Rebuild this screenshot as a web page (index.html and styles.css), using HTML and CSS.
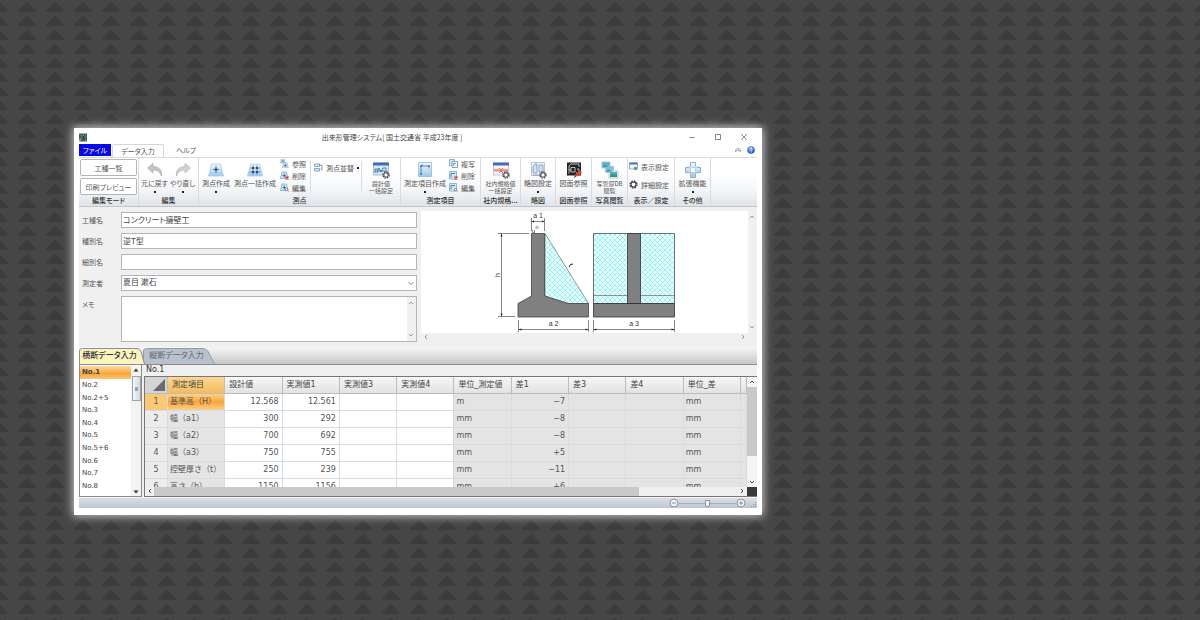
FILE: index.html
```html
<!DOCTYPE html>
<html lang="ja">
<head>
<meta charset="utf-8">
<title>出来形管理システム</title>
<link rel="stylesheet" href="styles.css">
</head>
<body>
<svg class="sprite" aria-hidden="true">
  <defs>
    <linearGradient id="g-road" x1="0" y1="0" x2="0" y2="1"><stop offset="0" stop-color="#f2f9ff"/><stop offset="1" stop-color="#9dc8ec"/></linearGradient>
    <radialGradient id="g-help" cx=".4" cy=".3" r=".7"><stop offset="0" stop-color="#7db1f5"/><stop offset="1" stop-color="#1c4fc0"/></radialGradient>
    <pattern id="hatch" width="5" height="5" patternUnits="userSpaceOnUse"><rect width="5" height="5" fill="#e6ffff"/><path d="M0 0l5 5M5 0l-5 5" stroke="#7fe9ec" stroke-width=".7"/></pattern>
    <symbol id="gear" viewBox="0 0 8 8"><circle cx="4" cy="4" r="3.1" fill="none" stroke="#444" stroke-width="1.2" stroke-dasharray="1.5 .93"/><circle cx="4" cy="4" r="2.200" fill="#fff" stroke="#333" stroke-width=".9"/></symbol>
    <symbol id="road" viewBox="0 0 16 14"><path d="M3.500 1h9L15.500 13H.5z" fill="url(#g-road)" stroke="#a9cdea" stroke-width=".8"/></symbol>
    <symbol id="sheet" viewBox="0 0 9 9"><path d="M.5 .5h5v6h-5z" fill="#d5e8f8" stroke="#6f9fcb" stroke-width=".8"/><path d="M3 2.500h5.500v6H3z" fill="#eef7ff" stroke="#5f94c6" stroke-width=".8"/><path d="M4.500 7V4.500H7" fill="none" stroke="#46799f" stroke-width=".7"/></symbol>
    <symbol id="mini-road" viewBox="0 0 9 9"><path d="M2 1h4.500L8 7.500H.5z" fill="#d2e8f9" stroke="#7fa9cd" stroke-width=".8"/><path d="M4.300 2.500v4M2.500 4.600H6" stroke="#35669a" stroke-width=".9"/></symbol>
    <symbol id="mini-sheet" viewBox="0 0 9 9"><path d="M.5 .5h7v7.500h-7z" fill="#cfe6f8" stroke="#7aa7ce" stroke-width=".8"/><path d="M2 6.500V2.500h4" fill="none" stroke="#35669a" stroke-width=".8"/></symbol>
    <symbol id="cross" viewBox="0 0 4 4"><path d="M.5 .5l3 3M3.500 .5l-3 3" stroke="#e0281e" stroke-width="1.100"/></symbol>
    <symbol id="lens" viewBox="0 0 4 4"><circle cx="1.600" cy="1.600" r="1.200" fill="#fff" stroke="#35669a" stroke-width=".7"/><path d="M2.500 2.500l1.200 1.200" stroke="#c8862e" stroke-width=".9"/></symbol>
  </defs>
</svg>

<main class="window">
  <header class="titlebar">
    <svg class="app-icon" viewBox="0 0 9 9"><path fill="#4a5a54" d="M0 0h9v9H0z"/><path d="M1 1l3 3-3 4M6 0l2 3-2 2 2 4" stroke="#46b48a" fill="none"/><path d="M3 1l4 6M7 1L3 7" stroke="#1f2b27" stroke-width=".8"/><path d="M0 5l2 1M6 3h2" stroke="#d84a42"/><path d="M0 8l2-1M4 2h1" stroke="#eee"/></svg>
    <h1 class="title">出来形管理システム[ 国土交通省 平成23年度 ]</h1>
    <div class="controls">
      <button aria-label="最小化"><svg viewBox="0 0 8 8"><path d="M1.500 4.500h5"/></svg></button>
      <button aria-label="最大化"><svg viewBox="0 0 8 8"><path d="M1.500 1.500h5v5h-5z"/></svg></button>
      <button aria-label="閉じる"><svg viewBox="0 0 8 8"><path d="M1.200 1.200l5.600 5.600M6.800 1.200L1.200 6.800"/></svg></button>
    </div>
  </header>

  <nav class="menu">
    <button class="menu-file">ファイル</button>
    <button class="menu-tab is-active">データ入力</button>
    <button class="menu-tab">ヘルプ</button>
    <button class="menu-tool push" aria-label="リボンを折りたたむ"><svg viewBox="0 0 8 8"><path d="M1.500 5.500V4L4 2l2.500 2v1.500L4 4z" fill="#fff" stroke="#777" stroke-width=".7"/></svg></button>
    <button class="menu-tool" aria-label="ヘルプを開く"><svg viewBox="0 0 8 8"><circle cx="4" cy="4" r="3.800" fill="url(#g-help)"/><path d="M2.900 3.100c0-1.500 2.300-1.500 2.300 0 0 .8-1.100.8-1.100 1.700M4.100 5.500v.9" fill="none" stroke="#fff" stroke-width=".9"/></svg></button>
  </nav>

  <section class="ribbon">
    <div class="group w60">
      <div class="group-body stack">
        <button class="plain">工種一覧</button>
        <button class="plain">印刷プレビュー</button>
      </div>
      <h2>編集モード</h2>
    </div>
    <div class="group w60">
      <div class="group-body center">
        <button class="big w28"><svg viewBox="0 0 18 18"><path d="M1.500 7L7 2.500v3C12.500 5.500 16.500 9 15.500 15 14 11 11.500 9 7 9v3z" fill="#c3c6c8" stroke="#a3a6a9" stroke-width=".7"/></svg><span>元に戻す</span><i class="drop"></i></button>
        <button class="big w28"><svg viewBox="0 0 18 18"><path d="M16.500 7L11 2.500v3C5.500 5.500 1.500 9 2.500 15 4 11 6.500 9 11 9v3z" fill="#cfd1d3" stroke="#b0b3b5" stroke-width=".7"/></svg><span>やり直し</span><i class="drop"></i></button>
      </div>
      <h2>編集</h2>
    </div>
    <div class="group w202">
      <div class="group-body">
        <button class="big w34"><svg viewBox="0 0 18 18"><use href="#road" x="1" y="2" width="16" height="14"/><path d="M9 5v7M6 8.500h6" stroke="#4a6f92"/><circle cx="9" cy="8.500" r="1.300" fill="#24527c"/></svg><span>測点作成</span><i class="drop"></i></button>
        <button class="big w44"><svg viewBox="0 0 18 18"><use href="#road" x="1" y="2" width="16" height="14"/><path d="M7 4v10M11 4v10M4 7h10M3.500 11h11" stroke="#5a7c9c" stroke-width=".8"/><path d="M6 6h2v2H6zM10 6h2v2h-2zM6 10h2v2H6zM10 10h2v2h-2z" fill="#24486a"/></svg><span>測点一括作成</span></button>
        <div class="smalls">
          <button class="small"><svg viewBox="0 0 9 9"><use href="#mini-road" x="0" y="-1" width="6" height="6"/><use href="#mini-road" x="2" y="3" width="7" height="7"/></svg><span>参照</span></button>
          <button class="small"><svg viewBox="0 0 9 9"><use href="#mini-road" width="9" height="9"/><use href="#cross" x="5" y="5" width="4" height="4"/></svg><span>削除</span></button>
          <button class="small"><svg viewBox="0 0 9 9"><use href="#mini-road" width="9" height="9"/><use href="#lens" x="5" y="5" width="4" height="4"/></svg><span>編集</span></button>
        </div>
        <div class="sub w52">
          <button class="small"><svg viewBox="0 0 9 9"><path d="M.5 1h5v2.500h-5zM.5 5.500h5V8h-5z" fill="#dcecf9" stroke="#6a93bd" stroke-width=".8"/><path d="M5.500 2.200H8v4.500M6.500 5.700L8 7.200" fill="none" stroke="#4f86b8" stroke-width=".8"/></svg><span>測点並替</span><i class="drop"></i></button>
        </div>
        <button class="big grow"><svg viewBox="0 0 18 18"><path d="M1.500 2h15v12h-15z" fill="#d7e9f8" stroke="#8fadc8" stroke-width=".8"/><path d="M1 1.500h16v3H1z" fill="#3e6fb5"/><path d="M3 12V8h3M5 12l2-5 2 4 2-4h3v4M3 10h10" fill="none" stroke="#4b7094" stroke-width=".9"/><use href="#gear" x="10" y="10" width="8" height="8"/></svg><span>設計値<br>一括設定</span></button>
      </div>
      <h2>測点</h2>
    </div>
    <div class="group w80">
      <div class="group-body">
        <button class="big w48"><svg viewBox="0 0 18 18"><path d="M2.500 1.500h13v14h-13z" fill="url(#g-road)" stroke="#8cbbe3" stroke-width=".8"/><path d="M5 13V5h8M5 5l2-1.500M13 5v2.500" fill="none" stroke="#4c7ba6" stroke-width=".9"/><path d="M4.200 4.200h1.600v1.600H4.200zM12.200 4.200h1.600v1.600h-1.600zM4.200 12.200h1.600v1.600H4.200z" fill="#2e618f"/></svg><span>測定項目作成</span><i class="drop"></i></button>
        <div class="smalls tight">
          <button class="small"><svg viewBox="0 0 9 9"><use href="#sheet" width="9" height="9"/></svg><span>複写</span></button>
          <button class="small"><svg viewBox="0 0 9 9"><use href="#mini-sheet" width="9" height="9"/><use href="#cross" x="5" y="5" width="4" height="4"/></svg><span>削除</span></button>
          <button class="small"><svg viewBox="0 0 9 9"><use href="#mini-sheet" width="9" height="9"/><use href="#lens" x="5" y="5" width="4" height="4"/></svg><span>編集</span></button>
        </div>
      </div>
      <h2>測定項目</h2>
    </div>
    <div class="group w40">
      <div class="group-body">
        <button class="big grow"><svg viewBox="0 0 18 18"><path d="M1.500 2h15v12h-15z" fill="#f4f7fa" stroke="#a9bccd" stroke-width=".8"/><path d="M1 1.500h16v3H1z" fill="#3e6fb5"/><path d="M2 7.500h14v3.500H2z" fill="#f9c9c4"/><path d="M2 9.200h14M7 7l2 2 2-2M7 12l2-2 2 2" fill="none" stroke="#e66a60"/><use href="#gear" x="10" y="10" width="8" height="8"/></svg><span>社内規格値<br>一括設定</span></button>
      </div>
      <h2>社内規格...</h2>
    </div>
    <div class="group w35">
      <div class="group-body">
        <button class="big grow"><svg viewBox="0 0 18 18"><path d="M2.500 1.500h13v13h-13z" fill="#edf5fc" stroke="#9dbbd6" stroke-width=".8"/><path d="M4 12V6l2-3h2v9zM10 4h4v7h-4zM4 14h8" fill="#cfe0ef" stroke="#7794b0" stroke-width=".8"/><use href="#gear" x="10" y="10" width="8" height="8"/></svg><span>略図設定</span><i class="drop"></i></button>
      </div>
      <h2>略図</h2>
    </div>
    <div class="group w36">
      <div class="group-body">
        <button class="big grow"><svg viewBox="0 0 18 18"><path d="M2 1.500h14v13H2z" fill="#222"/><path d="M4 12.500V5l2-2h8v3M6 11V6.500h4V11zM12 8h2v4h-3M4 9h2" fill="none" stroke="#e3e3e3" stroke-width=".8"/><path d="M10 15.500l1-3.500 4-2.500 2 2-3 3.500z" fill="#d9463b"/><path d="M9 16.500l2-1.500" stroke="#333"/></svg><span>図面参照</span></button>
      </div>
      <h2>図面参照</h2>
    </div>
    <div class="group w36">
      <div class="group-body">
        <button class="big grow"><svg viewBox="0 0 18 18"><g stroke="#9cc4e0" stroke-width=".8"><path d="M1 1h8v6H1z" fill="#5fabe0"/><path d="M4.500 5.500h8v6h-8z" fill="#7abfe9"/><path d="M8 10h9v7H8z" fill="#eaf5fc"/></g><path d="M2 5.500l2-2 3 2.500H2zM5.500 10l2-2 3.500 2.700H5.500z" fill="#47a36a"/><path d="M9 11h7v5H9z" fill="#54a5dd"/><path d="M9 15l2.500-2.500 2 1.500 2.500-1v3H9z" fill="#3c9a5b"/></svg><span>写管屋DB<br>閲覧</span></button>
      </div>
      <h2>写真閲覧</h2>
    </div>
    <div class="group w47">
      <div class="group-body stack roomy">
        <button class="small"><svg viewBox="0 0 9 9"><path d="M.5 1h8v6h-8z" fill="#eef3f7" stroke="#879bb0" stroke-width=".8"/><path d="M.5 .5h8v2h-8z" fill="#4a79b8"/><path d="M5 5h3v3H5z" fill="#58a878"/></svg><span>表示設定</span></button>
        <button class="small"><svg viewBox="0 0 9 9"><use href="#gear" width="9" height="9"/></svg><span>詳細設定</span></button>
      </div>
      <h2>表示／設定</h2>
    </div>
    <div class="group w36">
      <div class="group-body">
        <button class="big grow"><svg viewBox="0 0 18 18"><path d="M6.500 1.500h5V5L13 6.500h3.500v5H13L11.500 13v3.500h-5V13L5 11.500H1.500v-5H5L6.500 5z" fill="url(#g-road)" stroke="#8ba6c0" stroke-width=".9"/><path d="M6.500 6.500h5v5h-5z" fill="#f6fbff" stroke="#a8c2d9" stroke-width=".7"/></svg><span>拡張機能</span><i class="drop"></i></button>
      </div>
      <h2>その他</h2>
    </div>
  </section>

  <section class="overview">
    <form class="fields">
      <label for="f1">工種名</label><input id="f1" value="コンクリート擁壁工">
      <label for="f2">種別名</label><input id="f2" value="逆T型">
      <label for="f3">細別名</label><input id="f3" value="">
      <label for="f4">測定者</label>
      <div class="select-box"><select id="f4"><option>夏目 漱石</option></select><svg viewBox="0 0 8 8"><path d="M1.500 3L4 5.500 6.500 3"/></svg></div>
      <label for="f5">メモ</label>
      <div class="memo"><textarea id="f5"></textarea>
        <div class="thin-bar"><svg viewBox="0 0 8 8"><path d="M2 5l2-2 2 2"/></svg><svg viewBox="0 0 8 8"><path d="M2 3l2 2 2-2"/></svg></div>
      </div>
    </form>
    <div class="preview">
      <svg class="drawing" viewBox="421 211 327 122" font-size="7">
        <path d="M545 233.500L588.500 303.500H568L545 296z" fill="url(#hatch)" stroke="#555" stroke-width=".6"/>
        <path d="M531.500 233.500H544.500V296L568 303.500H588.500V317H518V303.500L531.500 296z" fill="#808080" stroke="#444" stroke-width=".8"/>
        <path d="M593.500 233.500h81v70h-81z" fill="url(#hatch)" stroke="#333" stroke-width=".7"/>
        <path d="M593.500 295.500h81" stroke="#777" stroke-width=".8"/>
        <path d="M627.500 233.500h13v70h-13zM593.500 303.500h81V317h-81z" fill="#808080" stroke="#333" stroke-width=".8"/>
        <path d="M531.500 218v13M544.500 218v13M531.500 221.500h13M498 233.500h31M498 316.500h17M501.500 233.500v83M518.500 320v12M588.500 320v12M518.500 329.500h70M593.500 320v12M674.500 320v12M593.500 329.500h81M532.500 230v2.500h2V230" fill="none" stroke="#555" stroke-width=".7"/>
        <path d="M531.500 221.500l2.500-1v2zM544.500 221.500l-2.500-1v2zM501.500 233.500l-1 3h2zM501.500 316.500l-1-3h2zM518.500 329.500l3-1v2zM588.500 329.500l-3-1v2zM593.500 329.500l3-1v2zM674.500 329.500l-3-1v2z" fill="#222"/>
        <path d="M569 267l1.500-2.500 2.500-.5" fill="none" stroke="#222"/>
        <g fill="#333" text-anchor="middle"><text x="538" y="217.500">a 1</text><text x="537" y="229" font-size="5">n</text><text x="553.500" y="325.500">a 2</text><text x="634" y="325.500">a 3</text><text x="500" y="275" transform="rotate(-90 500 275)">h</text></g>
      </svg>
      <div class="thin-bar"><svg viewBox="0 0 8 8"><path d="M2 5l2-2 2 2"/></svg><svg viewBox="0 0 8 8"><path d="M2 3l2 2 2-2"/></svg></div>
      <div class="thin-bar across"><svg viewBox="0 0 8 8"><path d="M5 2L3 4l2 2"/></svg><svg viewBox="0 0 8 8"><path d="M3 2l2 2-2 2"/></svg></div>
    </div>
  </section>

  <nav class="sheets">
    <button class="sheet-tab is-active"><svg viewBox="0 0 66 17" preserveAspectRatio="none"><path d="M.5 17V4q0-2.500 3-2.500H58q3 0 4 3L65.500 17" fill="#fdf3bd" stroke="#8a8f98"/></svg><span>横断データ入力</span></button>
    <button class="sheet-tab"><svg viewBox="0 0 72 17" preserveAspectRatio="none"><path d="M.5 17V4q0-2.500 3-2.500H60q3 0 5 3L71.500 17" fill="#b9c1cc" stroke="#949ba5"/></svg><span>縦断データ入力</span></button>
  </nav>

  <section class="data">
    <div class="points">
      <ul>
        <li class="is-active">No.1</li><li>No.2</li><li>No.2+5</li><li>No.3</li><li>No.4</li><li>No.5</li><li>No.5+6</li><li>No.6</li><li>No.7</li><li>No.8</li><li>No.9</li>
      </ul>
      <div class="list-bar"><svg viewBox="0 0 8 8"><path d="M1.500 5.500L4 2.500l2.500 3z"/></svg><i></i><svg viewBox="0 0 8 8"><path d="M1.500 2.500L4 5.500l2.500-3z"/></svg></div>
    </div>
    <div class="measure">
      <h3>No.1</h3>
      <div class="pane">
        <div class="table-clip">
          <table>
            <colgroup><col class="c-num"><col><col><col><col><col><col><col><col><col><col><col class="c-end"></colgroup>
            <thead><tr><th class="corner"><svg viewBox="0 0 12 12"><path d="M12 0v12H0z" fill="#6b6b6b"/></svg></th><th class="hot">測定項目</th><th>設計値</th><th>実測値1</th><th>実測値3</th><th>実測値4</th><th>単位_測定値</th><th>差1</th><th>差3</th><th>差4</th><th>単位_差</th><th></th></tr></thead>
            <tbody>
              <tr class="hot"><th>1</th><td class="ro">基準高（H）</td><td class="n">12.568</td><td class="n">12.561</td><td></td><td></td><td class="ro">m</td><td class="ro n">−7</td><td class="ro"></td><td class="ro"></td><td class="ro">mm</td><td class="ro"></td></tr>
              <tr><th>2</th><td class="ro">幅（a1）</td><td class="n">300</td><td class="n">292</td><td></td><td></td><td class="ro">mm</td><td class="ro n">−8</td><td class="ro"></td><td class="ro"></td><td class="ro">mm</td><td class="ro"></td></tr>
              <tr><th>3</th><td class="ro">幅（a2）</td><td class="n">700</td><td class="n">692</td><td></td><td></td><td class="ro">mm</td><td class="ro n">−8</td><td class="ro"></td><td class="ro"></td><td class="ro">mm</td><td class="ro"></td></tr>
              <tr><th>4</th><td class="ro">幅（a3）</td><td class="n">750</td><td class="n">755</td><td></td><td></td><td class="ro">mm</td><td class="ro n">+5</td><td class="ro"></td><td class="ro"></td><td class="ro">mm</td><td class="ro"></td></tr>
              <tr><th>5</th><td class="ro">控壁厚さ（t）</td><td class="n">250</td><td class="n">239</td><td></td><td></td><td class="ro">mm</td><td class="ro n">−11</td><td class="ro"></td><td class="ro"></td><td class="ro">mm</td><td class="ro"></td></tr>
              <tr><th>6</th><td class="ro">高さ（h）</td><td class="n">1150</td><td class="n">1156</td><td></td><td></td><td class="ro">mm</td><td class="ro n">+6</td><td class="ro"></td><td class="ro"></td><td class="ro">mm</td><td class="ro"></td></tr>
            </tbody>
          </table>
        </div>
        <div class="vbar"><svg viewBox="0 0 8 8"><path d="M2 5l2-2 2 2"/></svg><i></i><svg viewBox="0 0 8 8"><path d="M2 3l2 2 2-2"/></svg></div>
        <div class="hbar"><svg viewBox="0 0 8 8"><path d="M5 2L3 4l2 2"/></svg><div><i></i></div><svg viewBox="0 0 8 8"><path d="M3 2l2 2-2 2"/></svg></div>
        <div class="black"></div>
      </div>
    </div>
  </section>

  <footer class="status">
    <button aria-label="縮小"><svg viewBox="0 0 10 10"><circle cx="5" cy="5" r="4"/><path d="M3 5h4"/></svg></button>
    <input type="range" aria-label="表示倍率">
    <button aria-label="拡大"><svg viewBox="0 0 10 10"><circle cx="5" cy="5" r="4"/><path d="M3 5h4M5 3v4"/></svg></button>
    <svg class="grip" viewBox="0 0 6 6"><path d="M4 0h1v1H4zM2 2h1v1H2zM4 2h1v1H4zM0 4h1v1H0zM2 4h1v1H2zM4 4h1v1H4z" fill="#8d959e"/></svg>
  </footer>
</main>
</body>
</html>
```
FILE: styles.css
```css
* { box-sizing: border-box; }
body {
  margin: 0;
  min-height: 100vh;
  padding: 128px 438px 0 74px;
  color: #555;
  font: 7px/8px "Noto Sans CJK JP", sans-serif;
  background-color: #464646;
  background-image:
    linear-gradient(#464646 2px, transparent 2px),
    conic-gradient(from 138deg at 14px 1px, #3c3c3c 84deg, transparent 0);
  background-size: 28px 14px;
  background-position: 13px 12px, 13px 0;
}
h1, h2, h3, ul { margin: 0; padding: 0; font: inherit; }
ul { list-style: none; }
button, input, select, textarea { margin: 0; padding: 0; border: 0; border-radius: 0; background: none; color: inherit; font: inherit; outline: 0; }
button svg { display: block; }
.sprite { position: absolute; width: 0; height: 0; }

.window { padding: 0 5px 7px; background: #fff; box-shadow: 0 0 9px 1px rgba(255, 255, 255, .75); font-feature-settings: "palt"; }

.titlebar { display: flex; align-items: center; height: 15px; padding-top: 2px; }
.app-icon { width: 8px; height: 9px; margin-top: 2px; }
.title { flex: 1; padding-left: 9px; text-align: center; color: #444; }
.controls { display: flex; gap: 18px; padding-right: 9px; }
.controls svg { width: 8px; height: 8px; fill: none; stroke: #666; stroke-width: .8; }

.menu { display: flex; height: 14px; align-items: flex-end; }
.menu-file { width: 32px; height: 12px; margin: 0 1px 1px 0; background: #0808e8; color: #fff; }
.menu-tab { width: 44px; height: 13px; padding-bottom: 1px; }
.menu-tab.is-active { width: 52px; border: 1px solid #d3d7db; border-bottom: 0; border-radius: 2px 2px 0 0; }
.menu-tool { align-self: center; padding-right: 2px; }
.menu-tool.push { margin-left: auto; padding-right: 5px; }
.menu-tool svg { width: 8px; height: 8px; }

.ribbon { display: flex; height: 50px; border-top: 1px solid #d9dcdf; border-bottom: 1px solid #c0c6cc; background: linear-gradient(#fff 30%, #f4f6f8 65%, #dfe4e9); }
.group { flex: none; display: flex; flex-direction: column; border-right: 1px solid #d8dce0; }
.group-body { flex: 1; display: flex; padding-top: 3px; }
.group h2 { height: 10px; line-height: 9px; text-align: center; color: #333; font-weight: 500; white-space: nowrap; }
.w28 { width: 28px; } .w34 { width: 34px; } .w35 { width: 35px; } .w36 { width: 36px; } .w40 { width: 40px; }
.w44 { width: 44px; } .w47 { width: 47px; } .w48 { width: 48px; } .w52 { width: 52px; } .w60 { width: 60px; }
.w80 { width: 80px; } .w202 { width: 202px; }
.grow { flex: 1; }
.center { justify-content: center; }
.stack { flex-direction: column; gap: 2px; padding: 1px 1px 0; }
.stack.roomy { gap: 9px; padding: 4px 0 0 1px; }
.plain { height: 17px; border: 1px solid #b4b7ba; border-radius: 2px; background: #fff; }
.big { display: flex; flex-direction: column; align-items: center; line-height: 7px; white-space: nowrap; }
.big svg { width: 18px; height: 18px; margin-bottom: 1px; }
.big span:has(br) { font-size: 6px; }
.drop { width: 2px; height: 2px; background: #222; }
.big .drop { margin-top: 4px; }
.smalls { display: flex; flex-direction: column; gap: 3px; padding: 0 4px 0 3px; margin-top: -2px; }
.smalls.tight { padding: 0; }
.small { display: flex; align-items: center; gap: 3px; height: 9px; white-space: nowrap; }
.small svg { width: 9px; height: 9px; }
.sub { margin-bottom: 5px; padding: 2px 2px 0 3px; border: solid #d8dce0; border-width: 0 1px; }

.overview { display: flex; gap: 4px; height: 140px; padding: 4px 0 5px; background: #f0f0f0; }
.fields { flex: 1; display: grid; grid-template-columns: 39px 1fr; grid-template-rows: repeat(4, 16px) 1fr; row-gap: 5px; padding: 1px 0 0 3px; }
.fields label { line-height: 16px; }
.fields input, .select-box, .memo { border: 1px solid #b5b5b5; background: #fff; }
.fields input, .fields select { min-width: 0; padding: 0 1px 2px; font-size: 8px; color: #444; }
.select-box, .memo { display: flex; }
.select-box select { flex: 1; appearance: none; }
.select-box svg { width: 8px; margin-right: 1px; fill: none; stroke: #666; stroke-width: .8; }
.memo textarea { flex: 1; min-width: 0; resize: none; }
.thin-bar { display: flex; flex-direction: column; justify-content: space-between; width: 9px; padding: 2px 0; background: #f0f0f0; }
.thin-bar.across { flex-direction: row; width: auto; height: 9px; padding: 0 1px; }
.thin-bar svg { width: 8px; height: 8px; fill: none; stroke: #999; }
.preview { width: 336px; display: grid; grid-template: 1fr 9px / 1fr 9px; }
.drawing { width: 100%; height: 100%; background: #fff; font-family: "Liberation Sans", sans-serif; }

.sheets { display: flex; height: 18px; border-bottom: 1px solid #8c8c8c; background: linear-gradient(#f6f6f6, #e0e0e0 50%, #c6c6c6); }
.sheet-tab { position: relative; width: 72px; font-size: 8px; color: #5e6673; }
.sheet-tab.is-active { z-index: 1; width: 66px; margin-right: -2px; color: #333; font-weight: 500; }
.sheet-tab svg { position: absolute; inset: 0; width: 100%; height: 100%; }
.sheet-tab span { position: relative; display: block; padding: 0 8px 2px 3px; white-space: nowrap; }

.data { display: flex; gap: 2px; height: 132px; background: #f0f0f0; font-family: "DejaVu Sans", "Noto Sans CJK JP", sans-serif; font-feature-settings: normal; }
.points { width: 63px; display: flex; padding-top: 1px; border: solid #8c8c8c; border-width: 0 1px 1px; background: #fff; overflow: hidden; }
.points ul { flex: 1; display: grid; grid-auto-rows: 1fr; height: 139px; }
.points li { display: flex; align-items: center; padding-left: 2px; color: #444; }
.points li.is-active { background: linear-gradient(#fddaa0, #f9a63a 60%, #fbc777); font-weight: bold; }
.list-bar { width: 10px; display: flex; flex-direction: column; align-items: center; background: #f3f3f3; }
.list-bar svg { width: 8px; height: 8px; fill: #333; }
.list-bar i { width: 9px; height: 25px; margin: 2px 0 auto; border: 1px solid #9aa3ae; background: linear-gradient(#97a2b0, #97a2b0) 2px 10px / 3px 4px no-repeat, linear-gradient(90deg, #f5f7f9, #d2d9e1); }
.measure { flex: 1; min-width: 0; }
.measure h3 { height: 11px; padding-left: 2px; line-height: 10px; color: #333; font-size: 8px; }
.pane { display: grid; grid-template: 110px 9px / minmax(0, 1fr) 10px; border: solid #777; border-width: 1px 0 1px 1px; background: #f0f0f0; }
.table-clip { overflow: hidden; }
table { width: 100%; table-layout: fixed; border-collapse: separate; border-spacing: 0; font-size: 8px; }
.c-num { width: 23px; } .c-end { width: 6px; }
th, td { height: 17px; padding: 0 2px; border: solid #d3dbe4; border-width: 0 1px 1px 0; font-weight: normal; text-align: left; white-space: nowrap; background: #fff; line-height: 10px; }
thead th { padding: 0 4px; border-color: #b9bdc1; background: linear-gradient(#f7f7f7, #e2e2e2); color: #444; }
thead th.corner { padding: 0 2px 0 0; background: #d4d4d4; }
.corner svg { display: block; width: 12px; height: 12px; margin-left: auto; }
thead th.hot { background: linear-gradient(#fbd792, #f3bd5d); }
tbody th { padding: 0; text-align: center; background: #ececec; }
td.ro { background: #e4e4e4; border-color: #d7dce3; }
td.n { padding-right: 3px; text-align: right; }
tr.hot th { background: #fbc878; }
tr.hot td:nth-child(2) { background: linear-gradient(#fdd08b, #f9a53a 50%, #fcd08a); }
.vbar { display: flex; flex-direction: column; align-items: center; padding: 1px 0; background: #f5f5f5; }
.vbar i { width: 10px; height: 69px; margin: 1px 0 auto; background: #c9c9c9; }
.vbar svg, .hbar svg { flex: none; width: 8px; height: 8px; fill: none; stroke: #444; }
.hbar { display: flex; padding: 0 1px; }
.hbar div { flex: 1; display: flex; }
.hbar i { width: 83%; background: #c9c9c9; }
.black { background: #3a3a3a; }

.status { display: flex; align-items: center; justify-content: flex-end; height: 11px; border-top: 1px solid #f2f4f6; background: linear-gradient(#dbe0e5, #bcc5ce); }
.status button svg { width: 10px; height: 10px; fill: #eef0f2; stroke: #7c838b; stroke-width: .8; }
.status input { width: 57px; height: 10px; appearance: none; background: linear-gradient(#a6adb5, #a6adb5) center / 100% 1px no-repeat; }
.status input::-webkit-slider-thumb { appearance: none; width: 5px; height: 7px; border: 1px solid #8c939b; border-radius: 0 0 2px 2px; background: #f4f5f6; }
.grip { width: 6px; height: 6px; margin: 3px 0 0 5px; }
```
